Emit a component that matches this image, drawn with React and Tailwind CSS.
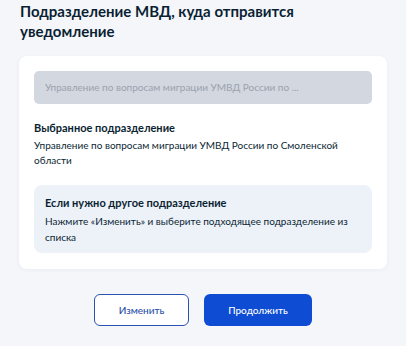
export default function App() {
  return (
    <div
      className="min-h-screen w-[406px] bg-[#f4f6fa] text-[#0b1f33]"
      style={{ fontFamily: "Lato, 'Noto Sans', sans-serif" }}
    >
      <div className="px-[20px] pt-[1px]">
        <h1 className="w-[300px] text-[15px] font-bold leading-[20px]">
          Подразделение МВД, куда отправится уведомление
        </h1>
      </div>

      <div className="mx-[19px] mt-[15px] rounded-[8px] bg-white px-[15px] pt-[15px] pb-[16px] shadow-[0_1px_4px_rgba(30,50,90,0.05)]">
        <div className="flex h-[33px] items-center rounded-[5px] bg-[#d3d7df] px-[11px]">
          <span className="truncate text-[10px] text-[#9aa2ae]">
            Управление по вопросам миграции УМВД России по ...
          </span>
        </div>

        <div className="mt-[16px] text-[11px] font-bold leading-[15px]">
          Выбранное подразделение
        </div>
        <p className="mt-[3px] text-[10px] leading-[15px]">
          Управление по вопросам миграции УМВД России по Смоленской области
        </p>

        <div className="mt-[17px] rounded-[8px] bg-[#edf1f8] px-[11px] pt-[10px] pb-[8px]">
          <div className="text-[11px] font-bold leading-[15px]">
            Если нужно другое подразделение
          </div>
          <p className="mt-[3px] text-[10px] leading-[16px]">
            Нажмите «Изменить» и выберите подходящее подразделение из списка
          </p>
        </div>
      </div>

      <div className="mt-[25px] flex justify-center gap-[15px]">
        <button className="h-[32px] w-[95px] rounded-[6px] border border-[#2a52b5] bg-white text-[10px] font-medium text-[#2a4fa6]">
          Изменить
        </button>
        <button className="h-[32px] w-[108px] rounded-[6px] bg-[#0d4cd3] text-[10px] font-medium text-white">
          Продолжить
        </button>
      </div>
    </div>
  );
}
